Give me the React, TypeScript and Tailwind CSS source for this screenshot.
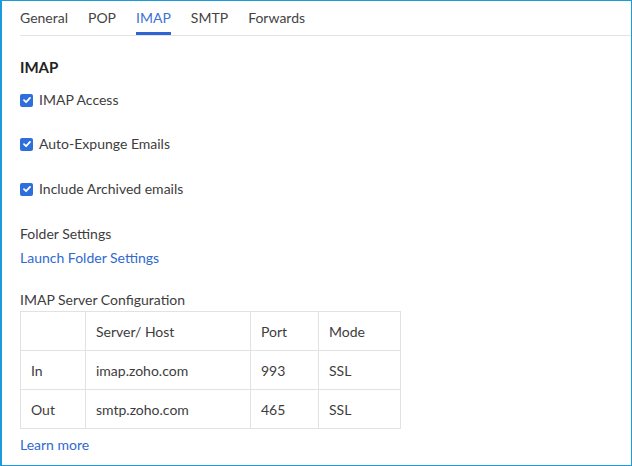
const tabs = ["General", "POP", "IMAP", "SMTP", "Forwards"];

const options = ["IMAP Access", "Auto-Expunge Emails", "Include Archived emails"];

const rows = [
  ["", "Server/ Host", "Port", "Mode"],
  ["In", "imap.zoho.com", "993", "SSL"],
  ["Out", "smtp.zoho.com", "465", "SSL"],
];

function Check() {
  return (
    <span className="flex h-[13px] w-[13px] items-center justify-center rounded-[2px] bg-[#2f6fdc]">
      <svg width="10" height="10" viewBox="0 0 10 10" fill="none">
        <path d="M2 5.2 4.1 7.2 8 2.9" stroke="white" strokeWidth="1.8" strokeLinecap="round" strokeLinejoin="round" />
      </svg>
    </span>
  );
}

export default function App() {
  return (
    <div
      className="h-[466px] w-[632px] overflow-hidden border-t border-r border-b border-l-2 border-[#1a9bdb] bg-white text-[14px] text-[#3d3d3d]"
      style={{ fontFamily: "Lato, 'Open Sans', sans-serif" }}
    >
      <div className="ml-[18px] flex gap-5 border-b border-[#e4e4e4]">
        {tabs.map((t) => (
          <div
            key={t}
            className={
              t === "IMAP"
                ? "h-[34px] border-b-[3px] border-[#2f64d4] pt-[7px] leading-[20px] text-[#3b72d6]"
                : "h-[34px] pt-[7px] leading-[20px] text-[#444]"
            }
          >
            {t}
          </div>
        ))}
      </div>

      <div className="pl-[18px]">
        <div className="mt-[21px] text-[15px] font-bold leading-[20px] text-[#222]">IMAP</div>

        {options.map((o, i) => (
          <div
            key={o}
            className={
              i === 0
                ? "mt-[13px] flex h-[20px] items-center gap-[6px]"
                : i === 1
                ? "mt-[24px] flex h-[20px] items-center gap-[6px]"
                : "mt-[25px] flex h-[20px] items-center gap-[6px]"
            }
          >
            <Check />
            <span className="leading-[20px]">{o}</span>
          </div>
        ))}

        <div className="mt-[25px] leading-[20px]">Folder Settings</div>
        <div className="mt-[4px] leading-[20px] text-[#3069d0]">Launch Folder Settings</div>

        <div className="mt-[22px] leading-[20px]">IMAP Server Configuration</div>
        <div className="mt-px grid w-[381px] grid-cols-[65px_165px_68px_82px] border-t border-l border-[#e2e2e2]">
          {rows.flatMap((r, ri) =>
            r.map((c, ci) => (
              <div
                key={ri + "-" + ci}
                className="flex h-[39px] items-center border-r border-b border-[#e2e2e2] pl-[10px]"
              >
                {c}
              </div>
            ))
          )}
        </div>

        <div className="mt-[6px] leading-[20px] text-[#3069d0]">Learn more</div>
      </div>
    </div>
  );
}
